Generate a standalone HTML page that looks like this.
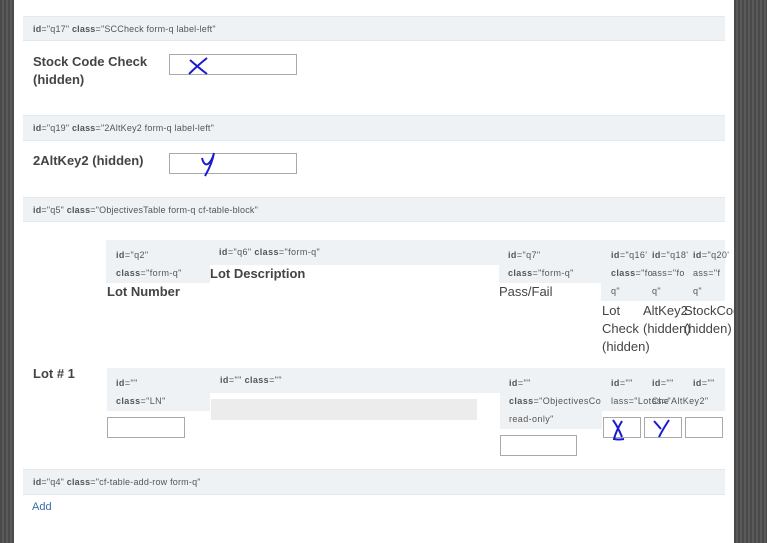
<!DOCTYPE html><html><head><style>
body{margin:0;width:767px;height:543px;overflow:hidden;background:#555;font-family:"Liberation Sans",sans-serif;position:relative}
.dark{position:absolute;top:0;height:543px;background:repeating-linear-gradient(90deg,#4a4a4a 0 2px,#5a5a5a 2px 4px);z-index:5}
.pan{position:absolute;left:14px;top:0;width:720px;height:543px;background:#fff}
.a{position:absolute;white-space:nowrap}
.bar{position:absolute;left:23px;width:702px;background:#eef2f5;border-top:1px solid #e3e8ec;border-bottom:1px solid #e3e8ec;font-size:9px;color:#555;box-sizing:border-box;padding-left:10px;letter-spacing:0.2px}
.s{font-size:9px;color:#555;letter-spacing:0.4px}
b{font-weight:bold}
.lb{font-size:13px;font-weight:bold;color:#444}
.cell{position:absolute;background:#eef2f5}
.in{position:absolute;border:1px solid #aaa;background:#fff;box-sizing:border-box}
</style></head><body>
<div class="dark" style="left:0;width:14px"></div>
<div class="dark" style="left:734px;width:33px"></div>
<div class="pan"></div>
<div class="bar" style="top:16px;height:25px;line-height:24px"><b>id</b>="q17" <b>class</b>="SCCheck form-q label-left"</div>
<div class="a lb" style="left:33px;top:53px;line-height:18px">Stock Code Check<br>(hidden)</div>
<div class="in" style="left:169px;top:54px;width:128px;height:21px"></div>
<svg class="a" style="left:185px;top:56px" width="30" height="22"><path d="M5 4 Q14 12 22 18 M22 2 Q12 10 4 18" stroke="#1a1ad0" stroke-width="2" fill="none"/></svg>
<div class="bar" style="top:115px;height:26px;line-height:25px"><b>id</b>="q19" <b>class</b>="2AltKey2 form-q label-left"</div>
<div class="a lb" style="left:33px;top:152px;line-height:18px">2AltKey2 (hidden)</div>
<div class="in" style="left:169px;top:153px;width:128px;height:21px"></div>
<svg class="a" style="left:198px;top:150px" width="22" height="30"><path d="M4 8 Q6 16 10 14 Q14 11 16 3 M16 3 Q14 14 7 26" stroke="#1a1ad0" stroke-width="2" fill="none"/></svg>
<div class="bar" style="top:197px;height:25px;line-height:24px"><b>id</b>="q5" <b>class</b>="ObjectivesTable form-q cf-table-block"</div>

<div class="cell" style="left:106px;top:240px;width:104px;height:43px"></div>
<div class="a s" style="left:116px;top:246px;line-height:18px"><b>id</b>="q2"<br><b>class</b>="form-q"</div>
<div class="a lb" style="left:107px;top:284px">Lot Number</div>
<div class="cell" style="left:210px;top:240px;width:289px;height:25px"></div>
<div class="a s" style="left:219px;top:246px;line-height:12px"><b>id</b>="q6" <b>class</b>="form-q"</div>
<div class="a lb" style="left:210px;top:266px">Lot Description</div>
<div class="cell" style="left:499px;top:240px;width:102px;height:43px"></div>
<div class="a s" style="left:508px;top:246px;line-height:18px"><b>id</b>="q7"<br><b>class</b>="form-q"</div>
<div class="a lb" style="left:499px;top:284px;font-weight:normal;color:#444">Pass/Fail</div>
<div class="cell" style="left:601px;top:240px;width:124px;height:61px"></div>
<div class="a s" style="left:611px;top:246px;line-height:18px"><b>id</b>="q16'<br><b>class</b>="fo<br>q"</div>
<div class="a s" style="left:652px;top:246px;line-height:18px"><b>id</b>="q18'<br>ass="fo<br>q"</div>
<div class="a s" style="left:693px;top:246px;line-height:18px"><b>id</b>="q20'<br>ass="f<br>q"</div>
<div class="a lb" style="left:602px;top:302px;line-height:18px;font-weight:normal">Lot<br>Check<br>(hidden)</div>
<div class="a lb" style="left:643px;top:302px;line-height:18px;font-weight:normal">AltKey2<br>(hidden)</div>
<div class="a lb" style="left:684px;top:302px;line-height:18px;font-weight:normal">StockCode<br>(hidden)</div>

<div class="a lb" style="left:33px;top:366px">Lot # 1</div>
<div class="cell" style="left:107px;top:368px;width:103px;height:43px"></div>
<div class="a s" style="left:116px;top:374px;line-height:18px"><b>id</b>=""<br><b>class</b>="LN"</div>
<div class="in" style="left:107px;top:417px;width:78px;height:21px"></div>
<div class="cell" style="left:210px;top:368px;width:290px;height:25px"></div>
<div class="a s" style="left:220px;top:374px;line-height:12px"><b>id</b>="" <b>class</b>=""</div>
<div class="a" style="left:211px;top:399px;width:266px;height:21px;background:#ececec"></div>
<div class="cell" style="left:500px;top:368px;width:102px;height:61px"></div>
<div class="a s" style="left:509px;top:374px;line-height:18px"><b>id</b>=""<br><b>class</b>="ObjectivesCo<br>read-only"</div>
<div class="in" style="left:500px;top:435px;width:77px;height:21px"></div>
<div class="cell" style="left:602px;top:368px;width:123px;height:43px"></div>
<div class="a s" style="left:611px;top:374px;line-height:18px"><b>id</b>=""<br>lass="LotChe</div>
<div class="a s" style="left:652px;top:374px;line-height:18px"><b>id</b>=""<br>ss="AltKey2"</div>
<div class="a s" style="left:693px;top:374px;line-height:18px"><b>id</b>=""</div>
<div class="in" style="left:603px;top:417px;width:38px;height:21px"></div>
<div class="in" style="left:644px;top:417px;width:38px;height:21px"></div>
<div class="in" style="left:685px;top:417px;width:38px;height:21px"></div>
<svg class="a" style="left:608px;top:417px" width="24" height="26"><path d="M5 3 Q10 10 14 20 M14 4 Q8 14 6 22 Q10 23 16 22" stroke="#1a1ad0" stroke-width="2" fill="none"/></svg>
<svg class="a" style="left:650px;top:417px" width="24" height="24"><path d="M4 4 L11 12 M19 3 Q13 12 9 20" stroke="#1a1ad0" stroke-width="2" fill="none"/></svg>

<div class="bar" style="top:469px;height:26px;line-height:25px"><b>id</b>="q4" <b>class</b>="cf-table-add-row form-q"</div>
<div class="a" style="left:32px;top:501px;font-size:11px;color:#3a6ea5">Add</div>
</body></html>
